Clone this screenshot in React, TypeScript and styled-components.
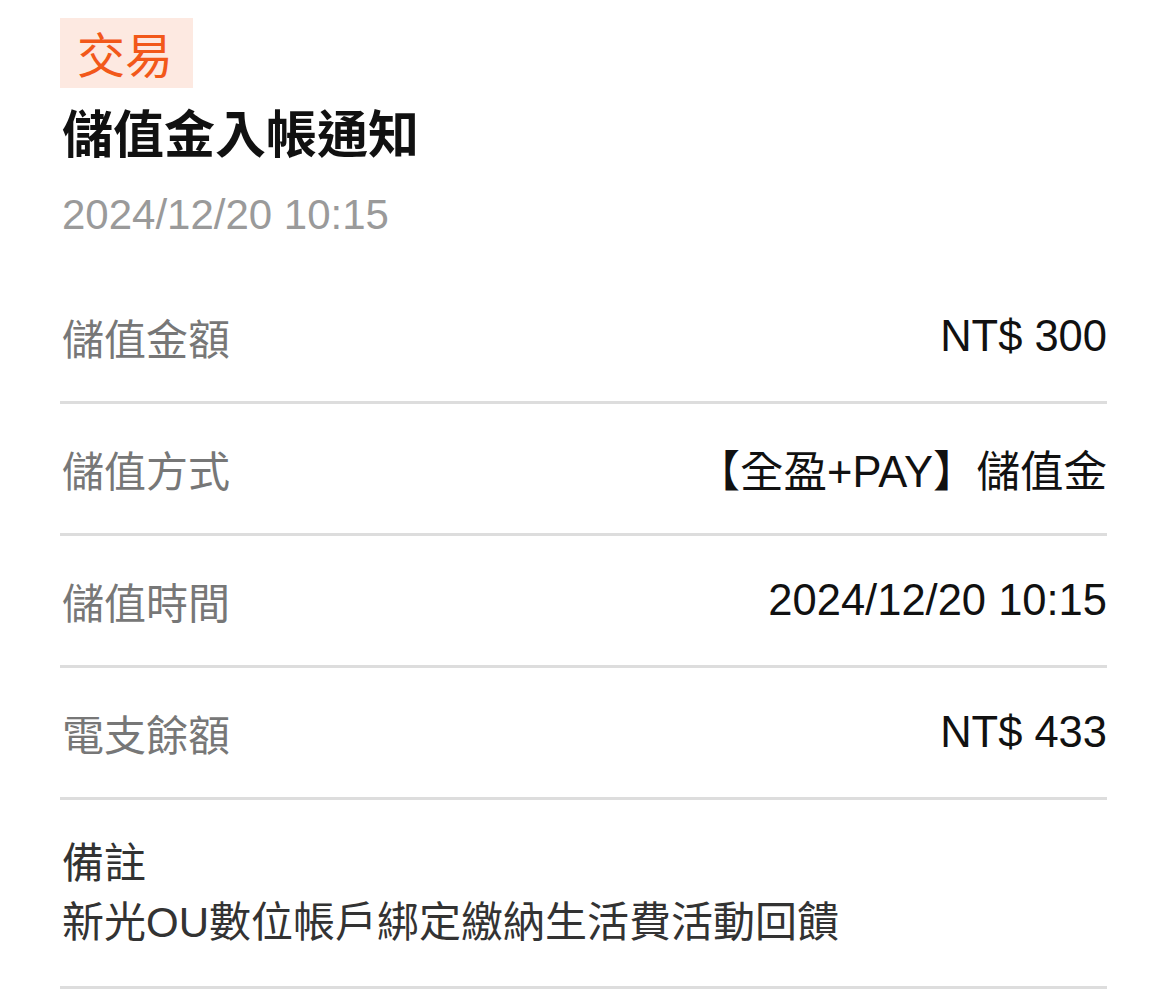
import React from "react";
import styled, { createGlobalStyle } from "styled-components";

const Global = createGlobalStyle`
  html, body { margin: 0; padding: 0; background: #ffffff; }
  body { font-family: "Liberation Sans", "Noto Sans CJK TC", sans-serif; }
`;

const Page = styled.div`
  padding: 18px 63px 0 60px;
  display: flex;
  flex-direction: column;
`;

const Badge = styled.span`
  align-self: flex-start;
  height: 70px;
  line-height: 68px;
  padding: 0 20px 0 17px;
  background: #fde9e1;
  color: #f2581a;
  font-size: 48px;
  font-family: "Noto Sans CJK TC", sans-serif;
`;

const Title = styled.h1`
  margin: 13px 0 0 2px;
  height: 60px;
  line-height: 60px;
  font-size: 51px;
  font-weight: 700;
  color: #111111;
  font-family: "Noto Sans CJK TC", sans-serif;
`;

const Stamp = styled.div`
  margin: 30px 0 0 2px;
  height: 50px;
  line-height: 48px;
  font-size: 42px;
  color: #9a9a9a;
`;

const Rows = styled.div`
  margin-top: 31px;
  display: flex;
  flex-direction: column;
`;

const Row = styled.div`
  height: 129px;
  border-bottom: 3px solid #dddddd;
  display: flex;
  align-items: center;
  justify-content: space-between;
`;

const Label = styled.span`
  margin-left: 2px;
  font-size: 42px;
  color: #777777;
`;

const Value = styled.span`
  font-size: 43.5px;
  color: #111111;
`;

const Note = styled.div`
  padding: 34px 0 34px 2px;
  border-bottom: 3px solid #dddddd;
  font-size: 42px;
  line-height: 59px;
  color: #333333;
  display: flex;
  flex-direction: column;
`;

const rows = [
  { label: "儲值金額", value: "NT$ 300" },
  { label: "儲值方式", value: "【全盈+PAY】儲值金" },
  { label: "儲值時間", value: "2024/12/20 10:15" },
  { label: "電支餘額", value: "NT$ 433" },
];

export default function App() {
  return (
    <>
      <Global />
      <Page>
        <Badge>交易</Badge>
        <Title>儲值金入帳通知</Title>
        <Stamp>2024/12/20 10:15</Stamp>
        <Rows>
          {rows.map((r) => (
            <Row key={r.label}>
              <Label>{r.label}</Label>
              <Value>{r.value}</Value>
            </Row>
          ))}
          <Note>
            <span>備註</span>
            <span>新光OU數位帳戶綁定繳納生活費活動回饋</span>
          </Note>
        </Rows>
      </Page>
    </>
  );
}
